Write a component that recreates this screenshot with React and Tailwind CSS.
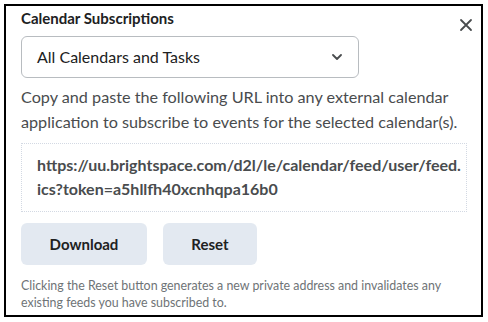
export default function App() {
    return (
        <div className="w-[488px] h-[322px] bg-white p-[4px] font-['Lato','Liberation_Sans',sans-serif]">
            <div className="relative w-[479px] h-[313px] border-2 border-black px-[15px]">
                <h1 className="text-[15px] leading-[24px] font-bold text-[#202122]">
                    Calendar Subscriptions
                </h1>
                <button className="absolute right-[8px] top-[12px] text-[#494c4e]">
                    <svg width="14" height="14" viewBox="0 0 14 14" fill="none" stroke="currentColor" strokeWidth="1.8" strokeLinecap="round">
                        <path d="M2 2l10 10M12 2L2 12" />
                    </svg>
                </button>
                <div className="mt-[6px] w-[338px] h-[42px] rounded-[6px] border border-[#b8bcc0] flex items-center justify-between pl-[15px] pr-[16px] text-[16px] text-[#202122]">
                    <span>All Calendars and Tasks</span>
                    <svg width="10" height="6" viewBox="0 0 10 6" fill="none" stroke="#494c4e" strokeWidth="1.8" strokeLinecap="round" strokeLinejoin="round">
                        <path d="M1 1l4 4 4-4" />
                    </svg>
                </div>
                <p className="mt-[6px] text-[16.2px] leading-[25px] text-[#494c4e]">
                    Copy and paste the following URL into any external calendar application to subscribe to events for the selected calendar(s).
                </p>
                <div className="mt-[9px] w-[446px] border border-dotted border-[#d3d9e3] px-[15px] pt-[9px] pb-[10px] text-[16px] leading-[24px] font-bold text-[#494c4e]">
                    https://uu.brightspace.com/d2l/le/calendar/feed/user/feed.
                    <br />
                    ics?token=a5hllfh40xcnhqpa16b0
                </div>
                <div className="mt-[11px] flex gap-[16px]">
                    <button className="w-[126px] h-[42px] rounded-[6px] bg-[#e3e9f1] text-[15px] font-bold text-[#202122]">
                        Download
                    </button>
                    <button className="w-[94px] h-[42px] rounded-[6px] bg-[#e3e9f1] text-[15px] font-bold text-[#202122]">
                        Reset
                    </button>
                </div>
                <p className="mt-[12px] text-[12.4px] leading-[17px] text-[#6e7376]">
                    Clicking the Reset button generates a new private address and invalidates any existing feeds you have subscribed to.
                </p>
            </div>
        </div>
    );
}
